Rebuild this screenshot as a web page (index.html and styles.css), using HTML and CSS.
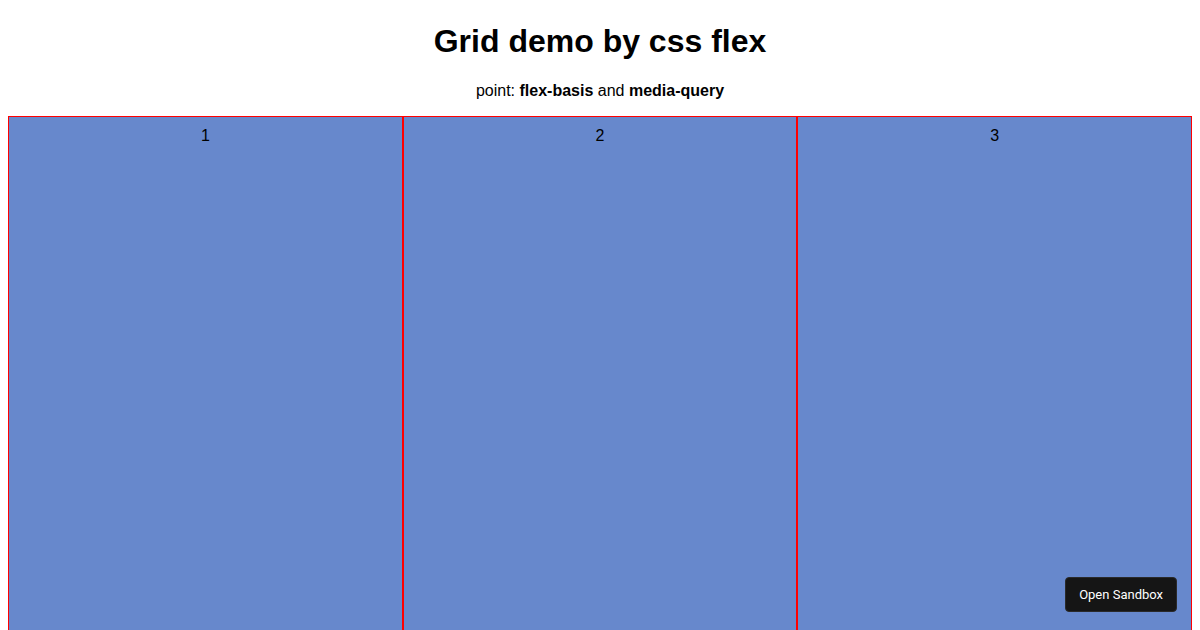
FILE: index.html
```html
<!DOCTYPE html>
<html lang="en">
<head>
  <meta charset="UTF-8">
  <title>Grid demo by css flex</title>
  <link rel="stylesheet" href="styles.css">
</head>
<body>
  <h1>Grid demo by css flex</h1>
  <p class="intro">point: <b>flex-basis</b> and <b>media-query</b></p>

  <!-- flex grid -->
  <div class="grid">
    <div class="cell">1</div>
    <div class="cell">2</div>
    <div class="cell">3</div>
  </div>

  <a class="sandbox-btn" href="#">Open Sandbox</a>
</body>
</html>
```

FILE: styles.css
```css
body {
  font-family: "Liberation Sans", Arial, sans-serif;
  color: #000;
  text-align: center;
}
h1 {
  font-size: 32px;
  margin: 15px 0 22px;
}
.intro {
  font-size: 16px;
  margin-bottom: 16px;
}
.grid {
  display: flex;
  flex-wrap: wrap;
  height: 600px;
}
.cell {
  flex-basis: 33.3333%;
  box-sizing: border-box;
  border: 1px solid #ff0000;
  background-color: #6788cc;
  padding: 10px;
}
.sandbox-btn {
  position: fixed;
  right: 23px;
  bottom: 18px;
  padding: 9px 13px;
  background-color: #151515;
  color: #fff;
  font-family: Roboto, "Liberation Sans", sans-serif;
  font-size: 13px;
  text-decoration: none;
  border-radius: 4px;
  border: 1px solid #2a2a2a;
}
```
